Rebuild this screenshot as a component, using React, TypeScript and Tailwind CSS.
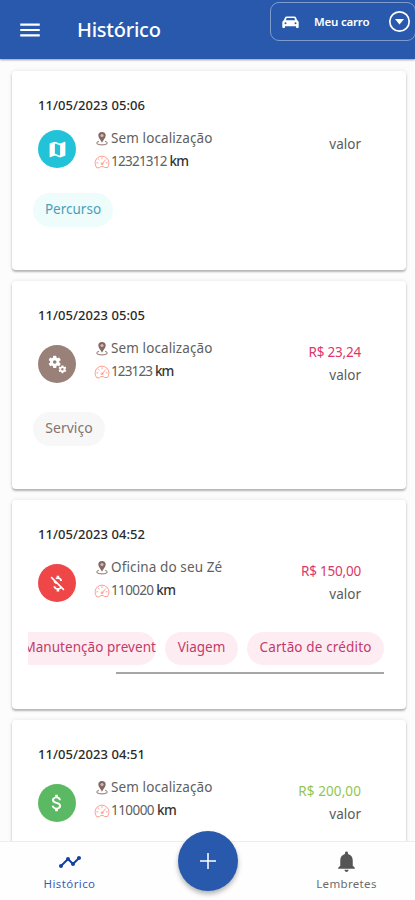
import type { ReactNode } from "react";
import {
  MdMap,
  MdMiscellaneousServices,
  MdMoneyOff,
  MdAttachMoney,
  MdTimeline,
  MdNotifications,
  MdMenu,
} from "react-icons/md";

function CarIcon() {
  return (
    <svg className="h-[12px] w-[17px]" viewBox="0 0 17 12" fill="none">
      <path d="M4.500.5h8c.8 0 1.200.4 1.500 1l1.200 2.800c1 .5 1.500 1.300 1.500 2.400V11c0 .6-.3.900-.9.900h-.9c-.6 0-.9-.3-.9-.9v-.7H3v.7c0 .6-.3.900-.9.900h-.9C.6 11.900.3 11.600.3 11V6.700c0-1.100.5-1.900 1.500-2.400L3 1.500c.3-.6.700-1 1.500-1Z" fill="white" />
      <path d="M4.700 2h7.600l.9 2.300H3.800Z" fill="#2859ad" />
      <circle cx="3.500" cy="7.200" r="1" fill="#2859ad" />
      <circle cx="13.500" cy="7.200" r="1" fill="#2859ad" />
    </svg>
  );
}

function PinIcon() {
  return (
    <svg className="h-[15px] w-[12px]" viewBox="0 0 12 15" fill="none">
      <path d="M3 10.200C-.5 11.300.2 13.900 6 13.900s6.500-2.600 3-3.700" stroke="#a18d86" strokeWidth="1.100" />
      <path d="M6 11.800C4.800 9.300 2.300 7 2.300 4.600a3.700 3.700 0 0 1 7.400 0C9.700 7 7.200 9.300 6 11.800Z" fill="#806a65" />
      <circle cx="6" cy="4.500" r="1.600" fill="#e0b5ae" />
    </svg>
  );
}

function GaugeIcon() {
  return (
    <svg className="h-[14px] w-[16px]" viewBox="0 0 16 14" fill="none" stroke="#ff9d8c" strokeWidth="1" strokeLinecap="round" strokeLinejoin="round">
      <path d="M2.500 12.500a7 7 0 1 1 11 0h-3a3.300 3.300 0 0 0-5 0Z" />
      <path d="M8 2.800v1M2.800 7.800h1M12.200 7.800h1M4.400 4.200l.7.700M8.600 8.200l2.900-3.400" />
      <circle cx="8" cy="8.800" r=".9" />
    </svg>
  );
}

type EntryProps = {
  date: string;
  place: string;
  placeClass: string;
  distance: string;
  distanceClass: string;
  badge: string;
  icon: ReactNode;
  height: string;
  price?: string;
  priceClass?: string;
  compact?: boolean;
  children?: ReactNode;
};

function Entry({ date, place, placeClass, distance, distanceClass, badge, icon, height, price, priceClass, compact, children }: EntryProps) {
  return (
    <article className={`shrink-0 rounded-[4px] bg-white pt-[24px] shadow-[0_2px_2px_rgba(0,0,0,0.25),0_0_4px_rgba(0,0,0,0.1)] ${height}`}>
      <h2 className="ml-[26px] h-5 w-fit text-[13px] leading-5 font-medium tracking-[0.05px] whitespace-nowrap text-[#292929]">{date}</h2>
      <div className="flex h-[72px] pl-[26px]">
        <div className={`flex size-[38px] shrink-0 items-center justify-center rounded-full text-white ${badge} ${compact ? "mt-[15px]" : "mt-[20px]"}`}>{icon}</div>
        <div className="ml-[18px] flex flex-1 flex-col pt-[12px] text-[13.5px] text-[#606060]">
          <div className="flex h-[23px] items-center whitespace-nowrap">
            <span className="ml-[2px] w-[15px]"><PinIcon /></span>
            <span className={placeClass}>{place}</span>
          </div>
          <div className="flex h-[23px] items-center whitespace-nowrap">
            <span className="w-[17px]"><GaugeIcon /></span>
            <span className={distanceClass}>{distance} <span className="font-medium text-[#353535]">km</span></span>
          </div>
        </div>
        <div className={`mr-[45px] text-right text-[13.5px] leading-[23px] whitespace-nowrap text-[#5b5b5b] ${compact ? "pt-[18px]" : "pt-[16px]"}`}>
          {price && <div className={priceClass}>{price}</div>}
          <div>valor</div>
        </div>
      </div>
      {children}
    </article>
  );
}

export default function App() {
  return (
    <main className="flex h-[900px] w-[415px] flex-col overflow-hidden bg-[#fcfcfc] font-['Noto_Sans','Open_Sans',sans-serif]">
      <header className="z-10 flex h-[59px] shrink-0 bg-[#2859ad] text-white shadow-[0_1px_2px_rgba(0,0,0,0.4)]">
        <MdMenu className="mt-[17px] ml-[17px] size-[26px]" />
        <h1 className="mt-[14px] ml-[34px] text-[20px] leading-8 font-medium tracking-[-0.250px]">Histórico</h1>
        <div className="mt-[2px] mr-[-1px] ml-auto flex h-[39px] w-[146px] items-center rounded-[9px] border border-[#7f9bce] pl-[11px]">
          <CarIcon />
          <span className="ml-[15px] w-[61px] text-[11.5px] font-semibold tracking-[-0.200px] whitespace-nowrap">Meu carro</span>
          <svg className="ml-[13px] size-[23px] shrink-0" viewBox="0 0 23 23" fill="none">
            <circle cx="11.500" cy="11.500" r="9.700" stroke="white" strokeWidth="1.700" />
            <path d="M7 9h9l-4.500 5.400Z" fill="white" />
          </svg>
        </div>
      </header>

      <section className="flex min-h-0 flex-1 flex-col gap-[11px] overflow-hidden pt-[12px] pr-[9px] pl-[12px]">
        <Entry height="h-[199px]" compact date="11/05/2023 05:06" place="Sem localização" placeClass="tracking-[0.100px]" distance="12321312" distanceClass="tracking-[-0.750px] text-[13.5px]" badge="bg-[#22c3d8]" icon={<MdMap className="size-[21px]" />}>
          <div className="mt-[6px] ml-[21px] h-[34px] w-[80px] rounded-full bg-[#effcfc] text-center text-[13.5px] leading-[32px] text-[#4aa0b8]">Percurso</div>
        </Entry>
        <Entry height="h-[208px]" date="11/05/2023 05:05" place="Sem localização" placeClass="tracking-[0.100px]" distance="123123" distanceClass="tracking-[-0.850px] text-[13.5px]" badge="bg-[#998078]" icon={<MdMiscellaneousServices className="size-[21px]" />} price="R$ 23,24" priceClass="tracking-[-0.200px] text-[#dc3768]">
          <div className="mt-[15px] ml-[21px] h-[34px] w-[72px] rounded-full bg-[#f8f7f7] text-center text-[14px] leading-[32px] text-[#83736e]">Serviço</div>
        </Entry>
        <Entry height="h-[209px]" date="11/05/2023 04:52" place="Oficina do seu Zé" placeClass="tracking-[0.120px]" distance="110020" distanceClass="tracking-[-0.650px] text-[13.5px]" badge="bg-[#ef4648]" icon={<MdMoneyOff className="size-[21px]" />} price="R$ 150,00" priceClass="tracking-[-0.200px] text-[#dc3768]">
          <div className="mt-[16px] mr-[22px] ml-[16px] flex h-[33px] justify-end gap-[9px] overflow-hidden text-[13.5px] leading-[31px] whitespace-nowrap text-[#c43a69]">
            <div className="shrink-0 rounded-full bg-[#fdedf3] pl-6 tracking-[0.050px]">Manutenção prevent</div>
            <div className="w-[73px] shrink-0 rounded-full bg-[#fdedf3] text-center">Viagem</div>
            <div className="w-[137px] shrink-0 rounded-full bg-[#fdedf3] text-center tracking-[0.150px]">Cartão de crédito</div>
          </div>
          <div className="mt-[7px] ml-[104px] h-[2px] w-[268px] bg-[#a6a6a6]" />
        </Entry>
        <Entry height="h-[199px]" date="11/05/2023 04:51" place="Sem localização" placeClass="tracking-[0.100px]" distance="110000" distanceClass="tracking-[-0.550px] text-[13.5px]" badge="bg-[#5cb963]" icon={<MdAttachMoney className="size-[22px]" />} price="R$ 200,00" priceClass="tracking-[0.100px] text-[#91c653]" />
      </section>

      <nav className="relative z-10 flex h-[59px] shrink-0 border-t border-[#ededed] bg-[#fefefe] text-[11.500px]">
        <div className="flex w-[139px] flex-col items-center pt-[8px] text-[#3c5fb2]">
          <MdTimeline className="size-[24px] text-[#1740a3]" />
          <span className="leading-[19px] tracking-[0.400px]">Histórico</span>
        </div>
        <button aria-label="Adicionar" className="absolute top-[-11px] left-[178px] flex size-[60px] items-center justify-center rounded-full bg-[#2859ad] shadow-[0_3px_5px_rgba(0,0,0,0.3)]">
          <svg className="size-[16px]" viewBox="0 0 16 16" stroke="white" strokeWidth="1.500"><path d="M8 0v16M0 8h16" /></svg>
        </button>
        <div className="ml-auto flex w-[137px] flex-col items-center pt-[7px] text-[#6b6b6b]">
          <MdNotifications className="size-[25px] text-[#555]" />
          <span className="leading-[19px] tracking-[0.350px]">Lembretes</span>
        </div>
      </nav>
    </main>
  );
}
